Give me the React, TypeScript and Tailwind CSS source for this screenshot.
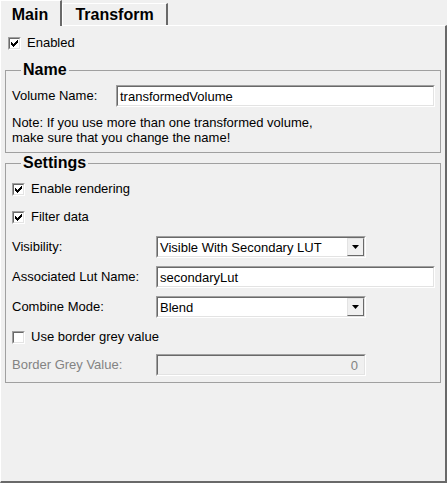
import React from 'react';

function Sunken({ className = '', inner = 'bg-white', children }: { className?: string; inner?: string; children?: React.ReactNode }) {
    return (
        <div className={`border border-t-[#a0a0a0] border-l-[#a0a0a0] border-r-white border-b-white ${className}`}>
            <div className={`h-full w-full border border-t-[#696969] border-l-[#696969] border-r-[#e3e3e3] border-b-[#e3e3e3] ${inner}`}>
                {children}
            </div>
        </div>
    );
}

// classic 7x7 check glyph, one 3px run per column
const CHECK_COLS = [2, 3, 4, 3, 2, 1, 0];

function CheckBox({ checked, label }: { checked: boolean; label: string }) {
    return (
        <div className="flex items-center h-[18px]">
            <Sunken className="w-[13px] h-[13px] shrink-0">
                {checked && (
                    <div className="h-full w-full flex items-center justify-center">
                        <svg viewBox="0 0 7 7" className="w-[7px] h-[7px] block" shapeRendering="crispEdges">
                            {CHECK_COLS.map((y, x) => (
                                <rect key={x} x={x} y={y} width={1} height={3} fill="#000" />
                            ))}
                        </svg>
                    </div>
                )}
            </Sunken>
            <span className="ml-[6px]">{label}</span>
        </div>
    );
}

function TextField({ value, className = '' }: { value: string; className?: string }) {
    return (
        <Sunken className={`h-[22px] ${className}`}>
            <div className="h-full flex items-center pl-[2px] leading-none">{value}</div>
        </Sunken>
    );
}

function Combo({ value }: { value: string }) {
    return (
        <Sunken className="h-[22px] w-[210px]">
            <div className="h-full flex items-center">
                <span className="flex-1 pl-[2px] leading-none">{value}</span>
                <div className="w-[17px] h-full border border-t-[#e3e3e3] border-l-[#e3e3e3] border-r-[#696969] border-b-[#696969] bg-[#f0f0f0] flex items-center justify-center">
                    <svg viewBox="0 0 7 4" className="w-[7px] h-[4px] block">
                        <path d="M0 0 H7 L3.5 4 Z" fill="#000" />
                    </svg>
                </div>
            </div>
        </Sunken>
    );
}

function Row({ label, children, labelWidth, muted = false, className = '' }: { label: string; children: React.ReactNode; labelWidth: string; muted?: boolean; className?: string }) {
    return (
        <div className={`flex items-center ${className}`}>
            <span className={`${labelWidth} shrink-0 ${muted ? 'text-[#838383]' : ''}`}>{label}</span>
            {children}
        </div>
    );
}

export default function App() {
    return (
        <div className="w-[447px] h-[483px] bg-[#f0f0f0] flex flex-col font-['Liberation_Sans',Arial,sans-serif] text-[13px] text-black overflow-hidden">
            <div className="flex items-end h-[25px] shrink-0">
                <div className="relative z-10 -mb-px h-[26px] w-[62px] border-l border-t border-white border-r-2 border-r-[#696969] bg-[#f0f0f0] flex items-center justify-center pr-[1px] pt-[2px]">
                    <span className="font-bold text-[16px] leading-none">Main</span>
                </div>
                <div className="h-[22px] w-[106px] border-l border-t border-white border-r-2 border-r-[#696969] bg-[#f0f0f0] flex items-center justify-center pt-[1px]">
                    <span className="font-bold text-[16px] leading-none">Transform</span>
                </div>
            </div>
            <div className="flex-1 border-t border-l border-white border-r-2 border-b-2 border-r-[#696969] border-b-[#696969] flex flex-col">
                <div className="mt-[8px] ml-[7px]">
                    <CheckBox checked label="Enabled" />
                </div>

                <fieldset className="mt-[9px] mx-[4px] border border-[#a0a0a0] pl-[6px] pr-[5px] pb-[7px]">
                    <legend className="ml-[9px] px-[2px] font-bold text-[16px] leading-[18px]">Name</legend>
                    <Row label="Volume Name:" labelWidth="w-[104px]" className="mt-[6px]">
                        <TextField value="transformedVolume" className="flex-1" />
                    </Row>
                    <p className="mt-[8px] leading-[15px]">
                        Note: If you use more than one transformed volume,
                        <br />
                        make sure that you change the name!
                    </p>
                </fieldset>

                <fieldset className="mt-[1px] mx-[4px] border border-[#a0a0a0] pl-[6px] pr-[5px] pb-[6px]">
                    <legend className="ml-[9px] px-[2px] font-bold text-[16px] leading-[18px]">Settings</legend>
                    <div className="mt-[8px]">
                        <CheckBox checked label="Enable rendering" />
                    </div>
                    <div className="mt-[10px]">
                        <CheckBox checked label="Filter data" />
                    </div>
                    <Row label="Visibility:" labelWidth="w-[144px]" className="mt-[10px]">
                        <Combo value="Visible With Secondary LUT" />
                    </Row>
                    <Row label="Associated Lut Name:" labelWidth="w-[144px]" className="mt-[8px]">
                        <TextField value="secondaryLut" className="flex-1" />
                    </Row>
                    <Row label="Combine Mode:" labelWidth="w-[144px]" className="mt-[8px]">
                        <Combo value="Blend" />
                    </Row>
                    <div className="mt-[10px]">
                        <CheckBox checked={false} label="Use border grey value" />
                    </div>
                    <Row label="Border Grey Value:" labelWidth="w-[144px]" muted className="mt-[8px]">
                        <Sunken className="h-[22px] w-[210px]" inner="bg-[#f0f0f0]">
                            <div className="h-full flex items-center justify-end pr-[6px] text-[#838383] leading-none">0</div>
                        </Sunken>
                    </Row>
                </fieldset>
            </div>
        </div>
    );
}
